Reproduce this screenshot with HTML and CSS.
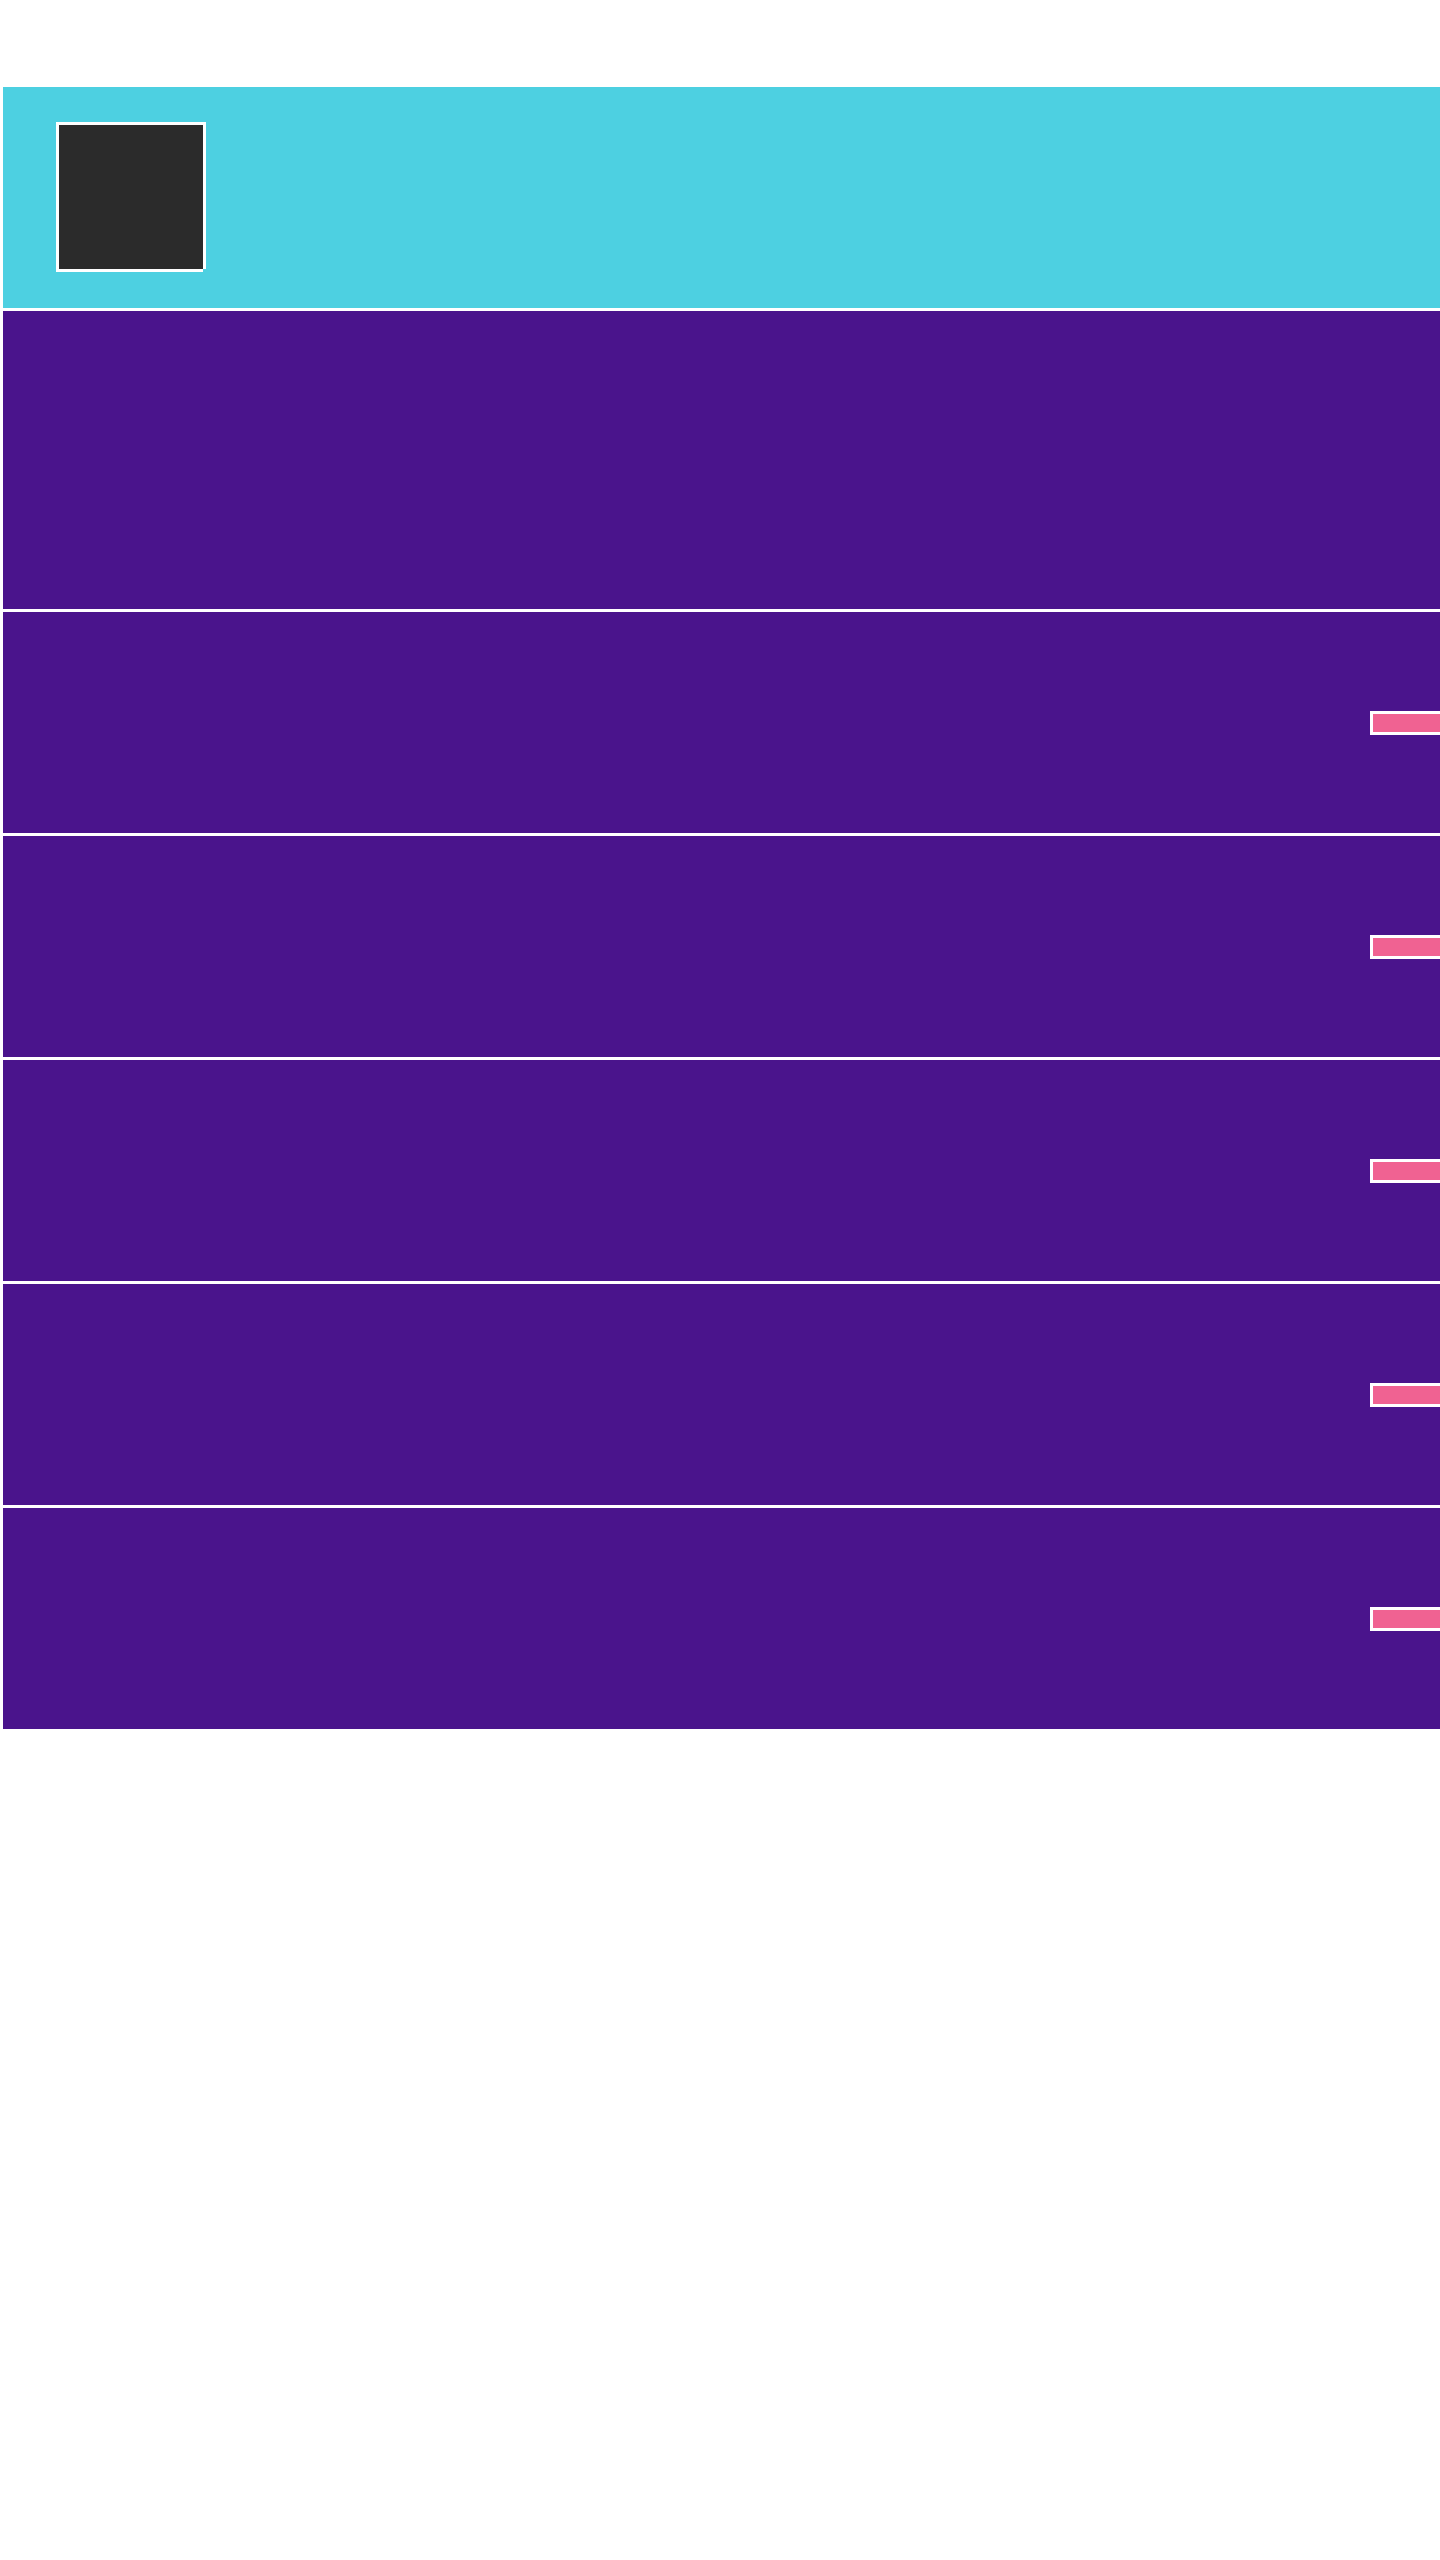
FILE: index.html
```html
<!DOCTYPE html>
<html lang="en">
<head>
<meta charset="utf-8">
<title>Layout</title>
<link rel="stylesheet" href="styles.css">
</head>
<body>
<div class="frame">
  <header class="top">
    <div class="avatar"></div>
  </header>
  <section class="row row-tall"></section>
  <section class="row"><div class="tag"></div></section>
  <section class="row"><div class="tag"></div></section>
  <section class="row"><div class="tag"></div></section>
  <section class="row"><div class="tag"></div></section>
  <section class="row"><div class="tag"></div></section>
</div>
</body>
</html>
```
FILE: styles.css
```css
html {
  overflow-x: hidden;
  background: #ffffff;
}
body {
  margin: 0;
  font-family: "Liberation Sans", Arial, sans-serif;
  background: #ffffff;
}
.frame {
  margin: 87px 0 0 3px;
  width: 1437px;
  display: flex;
  flex-direction: column;
  gap: 3px;
}
.top {
  height: 221px;
  background: #4dd0e1;
  box-sizing: border-box;
  padding: 38px 0 0 56px;
}
.avatar {
  width: 144px;
  height: 144px;
  background: #2b2b2b;
  box-shadow:
    -3px -3px 0 #ffffff,
    0 -3px 0 #ffffff,
    3px -3px 0 #ffffff,
    -3px 0 0 #ffffff,
    3px 0 0 #ffffff,
    -3px 3px 0 #ffffff,
    0 3px 0 #ffffff;
}
.row {
  height: 221px;
  background: #4a148c;
  display: flex;
  align-items: center;
  justify-content: flex-end;
}
.row-tall {
  height: 298px;
}
.tag {
  box-sizing: border-box;
  width: 80px;
  height: 24px;
  margin-right: -10px;
  background: #f06292;
  border: 3px solid #ffffff;
}
```
